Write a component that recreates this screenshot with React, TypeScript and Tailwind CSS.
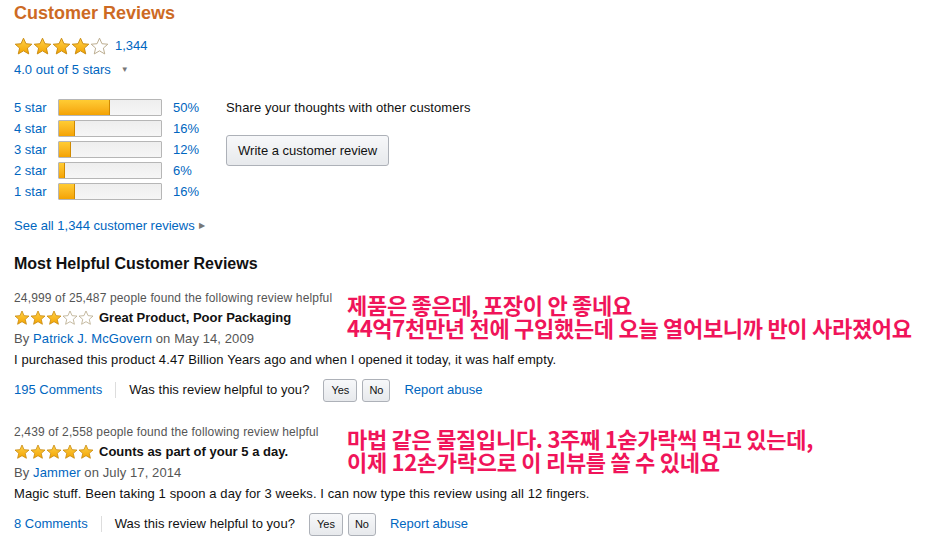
import React from "react";

const font = { fontFamily: '"Liberation Sans", Arial, sans-serif' };

function Star({ filled, size }: { filled: boolean; size: number }) {
  return (
    <svg width={size} height={size} viewBox="0 0 24 24">
      <defs>
        <linearGradient id="sg" x1="0" y1="0" x2="0" y2="1">
          <stop offset="0" stopColor="#ffd24a" />
          <stop offset="1" stopColor="#f3a300" />
        </linearGradient>
      </defs>
      <path
        d="M12 1.5l3.1 7 7.4.6-5.6 4.9 1.7 7.4L12 17.5l-6.6 3.9 1.7-7.4L1.5 9.1l7.4-.6z"
        fill={filled ? "url(#sg)" : "#fff"}
        stroke={filled ? "#c88a10" : "#b8a98a"}
        strokeWidth="1.2"
        strokeLinejoin="round"
      />
    </svg>
  );
}

function Stars({ n, size }: { n: number; size: number }) {
  return (
    <span className="flex">
      {[0, 1, 2, 3, 4].map((i) => (
        <Star key={i} filled={i < n} size={size} />
      ))}
    </span>
  );
}

const bars = [
  { label: "5 star", pct: 50 },
  { label: "4 star", pct: 16 },
  { label: "3 star", pct: 12 },
  { label: "2 star", pct: 6 },
  { label: "1 star", pct: 16 },
];

const btn =
  "h-[23px] text-[11px] text-[#111] border border-[#adb1b8] rounded-[3px] bg-gradient-to-b from-[#f7f8fa] to-[#e7e9ec]";

function Review(props: {
  helpful: string;
  stars: number;
  title: string;
  author: string;
  date: string;
  body: string;
  comments: string;
  note: string[];
}) {
  return (
    <div>
      <div className="flex items-start">
        <div className="w-[333px] shrink-0">
          <div className="text-[12px] text-[#555] leading-[18px] tracking-[0.15px]">{props.helpful}</div>
          <div className="flex items-center gap-[5px] h-[22px]">
            <Stars n={props.stars} size={16} />
            <span className="text-[13px] font-bold text-[#111]">{props.title}</span>
          </div>
          <div className="text-[13px] text-[#555] leading-[20px] tracking-[0.1px]">
            By <span className="text-[#0066c0]">{props.author}</span> on {props.date}
          </div>
        </div>
        <div
          className="text-[22px] font-bold leading-[23px] mt-[4px] text-[#f0145a] tracking-[-0.3px]"
          style={{ fontFamily: '"Noto Sans CJK KR", sans-serif' }}
        >
          {props.note.map((l) => (
            <div key={l}>{l}</div>
          ))}
        </div>
      </div>
      <div className="text-[13px] text-[#111] leading-[22px] tracking-[0.1px]">{props.body}</div>
      <div className="flex items-center h-[30px] mt-[4px] text-[13px]">
        <span className="text-[#0066c0]">{props.comments}</span>
        <span className="mx-[13px] h-[16px] w-px bg-[#ddd]" />
        <span className="text-[#111] tracking-[0.05px]">Was this review helpful to you?</span>
        <button className={`ml-[14px] px-[7px] ${btn}`}>Yes</button>
        <button className={`ml-[5px] px-[6px] ${btn}`}>No</button>
        <span className="ml-[14px] text-[#0066c0]">Report abuse</span>
      </div>
    </div>
  );
}

export default function App() {
  return (
    <div className="w-[936px] h-[544px] bg-white overflow-hidden px-[14px]" style={font}>
      <h1 className="text-[18px] font-bold text-[#cd6a24] leading-[26px]">Customer Reviews</h1>
      <div className="flex items-center gap-[6px] mt-[10px] h-[20px]">
        <Stars n={4} size={19} />
        <span className="text-[13px] text-[#0066c0]">1,344</span>
      </div>
      <div className="flex items-center h-[20px] mt-[4px] text-[13px] text-[#0066c0]">
        4.0 out of 5 stars
        <span className="ml-[10px] text-[8px] text-[#777]">▼</span>
      </div>

      <div className="flex mt-[17px]">
        <div className="flex flex-col">
          {bars.map((b) => (
            <div key={b.label} className="flex items-center h-[21px] text-[13px]">
              <span className="w-[44px] text-[#0066c0]">{b.label}</span>
              <div className="w-[104px] h-[17px] border border-[#b6b6b6] bg-gradient-to-b from-[#eeeeee] to-[#f6f6f6] rounded-[1px] overflow-hidden">
                <div
                  className="h-full bg-gradient-to-b from-[#ffcc33] to-[#f4a300] border-r border-[#d08a00]"
                  style={{ width: `${b.pct}%` }}
                />
              </div>
              <span className="ml-[11px] text-[#0066c0]">{b.pct}%</span>
            </div>
          ))}
        </div>
        <div className="ml-[27px] flex flex-col items-start">
          <div className="text-[13px] text-[#111] leading-[20px] mt-[1px] tracking-[0.1px]">
            Share your thoughts with other customers
          </div>
          <button className="mt-[17px] h-[31px] px-[11px] text-[13px] text-[#111] border border-[#adb1b8] rounded-[3px] bg-gradient-to-b from-[#f7f8fa] to-[#e7e9ec]">
            Write a customer review
          </button>
        </div>
      </div>

      <div className="flex items-center h-[20px] mt-[14px] text-[13px] text-[#0066c0]">
        See all 1,344 customer reviews
        <span className="ml-[4px] text-[8px] text-[#777]">▶</span>
      </div>

      <h2 className="text-[16px] font-bold text-[#111] leading-[22px] mt-[17px]">Most Helpful Customer Reviews</h2>

      <div className="mt-[14px]">
        <Review
          helpful="24,999 of 25,487 people found the following review helpful"
          stars={3}
          title="Great Product, Poor Packaging"
          author="Patrick J. McGovern"
          date="May 14, 2009"
          body="I purchased this product 4.47 Billion Years ago and when I opened it today, it was half empty."
          comments="195 Comments"
          note={["제품은 좋은데, 포장이 안 좋네요", "44억7천만년 전에 구입했는데 오늘 열어보니까 반이 사라졌어요"]}
        />
      </div>
      <div className="mt-[18px]">
        <Review
          helpful="2,439 of 2,558 people found the following review helpful"
          stars={5}
          title="Counts as part of your 5 a day."
          author="Jammer"
          date="July 17, 2014"
          body="Magic stuff. Been taking 1 spoon a day for 3 weeks. I can now type this review using all 12 fingers."
          comments="8 Comments"
          note={["마법 같은 물질입니다. 3주째 1숟가락씩 먹고 있는데,", "이제 12손가락으로 이 리뷰를 쓸 수 있네요"]}
        />
      </div>
    </div>
  );
}
